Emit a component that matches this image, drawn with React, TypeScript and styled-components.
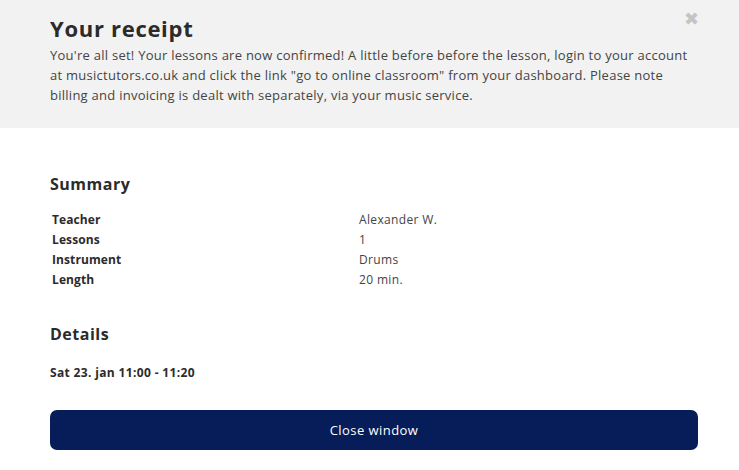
import React from 'react';
import styled, { createGlobalStyle } from 'styled-components';

const GlobalStyle = createGlobalStyle`
  html, body {
    margin: 0;
    padding: 0;
    background: #ffffff;
  }
  body {
    font-family: 'Open Sans', 'Liberation Sans', sans-serif;
    color: #333333;
  }
`;

const Modal = styled.div`
  width: 739px;
  min-height: 470px;
  background: #ffffff;
`;

const Header = styled.div`
  position: relative;
  background: #f2f2f2;
  height: 128px;
  box-sizing: border-box;
  padding: 13px 20px 0 50px;
`;

const Title = styled.h1`
  margin: 0;
  font-size: 22px;
  font-weight: 700;
  line-height: 30px;
  letter-spacing: 0.7px;
  color: #2b2b2b;
`;

const Intro = styled.p`
  margin: 2px 0 0 0;
  font-size: 13px;
  line-height: 20px;
  letter-spacing: 0.26px;
  white-space: nowrap;
  color: #444444;
`;

const CloseX = styled.button`
  position: absolute;
  top: 10px;
  right: 40px;
  border: none;
  background: none;
  padding: 0;
  cursor: pointer;
  color: #c4c4c4;
  font-size: 18px;
  font-weight: 700;
  line-height: 18px;
  font-family: 'DejaVu Sans', sans-serif;
`;

const Body = styled.div`
  padding: 45px 41px 0 50px;
`;

const SectionTitle = styled.h2`
  margin: 0;
  font-size: 16px;
  font-weight: 700;
  line-height: 22px;
  letter-spacing: 0.5px;
  color: #2b2b2b;
`;

const SummaryGrid = styled.div`
  display: grid;
  grid-template-columns: 307px 1fr;
  margin: 15px 0 0 2px;
  font-size: 12px;
  line-height: 20px;
`;

const Label = styled.div`
  font-weight: 700;
  letter-spacing: 0.1px;
  color: #2b2b2b;
`;

const Value = styled.div`
  font-weight: 400;
  letter-spacing: 0.35px;
  color: #444444;
`;

const DetailsSection = styled.div`
  margin-top: 33px;
`;

const Slot = styled.div`
  margin-top: 18px;
  font-size: 12px;
  font-weight: 700;
  line-height: 20px;
  letter-spacing: 0.35px;
  color: #2b2b2b;
`;

const CloseButton = styled.button`
  display: block;
  width: 100%;
  height: 40px;
  margin-top: 27px;
  border: none;
  border-radius: 7px;
  background: #061d59;
  color: #ffffff;
  font-family: inherit;
  font-size: 13px;
  letter-spacing: 0.45px;
  cursor: pointer;
`;

const summary = [
  ['Teacher', 'Alexander W.'],
  ['Lessons', '1'],
  ['Instrument', 'Drums'],
  ['Length', '20 min.'],
];

export default function App() {
  return (
    <>
      <GlobalStyle />
      <Modal>
        <Header>
          <Title>Your receipt</Title>
          <Intro>
            You're all set! Your lessons are now confirmed! A little before before the lesson, login to your account
            <br />
            at musictutors.co.uk and click the link "go to online classroom" from your dashboard. Please note
            <br />
            billing and invoicing is dealt with separately, via your music service.
          </Intro>
          <CloseX aria-label="Close">✖</CloseX>
        </Header>
        <Body>
          <SectionTitle>Summary</SectionTitle>
          <SummaryGrid>
            {summary.map(([k, v]) => (
              <React.Fragment key={k}>
                <Label>{k}</Label>
                <Value>{v}</Value>
              </React.Fragment>
            ))}
          </SummaryGrid>
          <DetailsSection>
            <SectionTitle>Details</SectionTitle>
            <Slot>Sat 23. jan 11:00 - 11:20</Slot>
          </DetailsSection>
          <CloseButton>Close window</CloseButton>
        </Body>
      </Modal>
    </>
  );
}
